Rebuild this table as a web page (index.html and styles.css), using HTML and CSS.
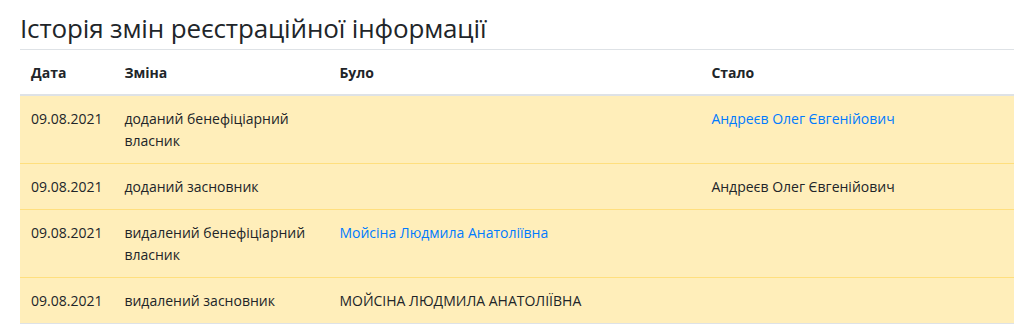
FILE: index.html
```html
<!DOCTYPE html>
<html>
<head>
    <meta charset="utf-8">
    <title>Історія змін</title>
    <link rel="stylesheet" href="styles.css">
</head>
<body>
    <div class="container">
        <h3 class="section-title">Історія змін реєстраційної інформації</h3>
        <table class="history">
            <thead>
                <tr>
                    <th class="col-date">Дата</th>
                    <th class="col-change">Зміна</th>
                    <th class="col-before">Було</th>
                    <th class="col-after">Стало</th>
                </tr>
            </thead>
            <tbody>
                <tr>
                    <td>09.08.2021</td>
                    <td>доданий бенефіціарний власник</td>
                    <td></td>
                    <td><a href="#">Андреєв Олег Євгенійович</a></td>
                </tr>
                <tr>
                    <td>09.08.2021</td>
                    <td>доданий засновник</td>
                    <td></td>
                    <td>Андреєв Олег Євгенійович</td>
                </tr>
                <tr>
                    <td>09.08.2021</td>
                    <td>видалений бенефіціарний власник</td>
                    <td><a href="#">Мойсіна Людмила Анатоліївна</a></td>
                    <td></td>
                </tr>
                <tr>
                    <td>09.08.2021</td>
                    <td>видалений засновник</td>
                    <td>МОЙСІНА ЛЮДМИЛА АНАТОЛІЇВНА</td>
                    <td></td>
                </tr>
            </tbody>
        </table>
    </div>
</body>
</html>
```
FILE: styles.css
```css
body {
    margin: 0;
    padding: 0;
    background: #fff;
    color: #212529;
    font-family: "Open Sans", "Noto Sans", sans-serif;
    font-size: 14px;
    line-height: 22px;
}

.container {
    padding: 0 10px 0 20px;
}

.section-title {
    margin: 0;
    padding-top: 8px;
    font-size: 26px;
    font-weight: 500;
    letter-spacing: -0.15px;
    line-height: 40px;
    color: #212529;
}

.history {
    width: 100%;
    border-collapse: collapse;
    margin-top: 1px;
}

.history th,
.history td {
    padding: 12px 11px 11px;
    text-align: left;
    vertical-align: top;
}

.history th {
    padding: 12px 11px 10px;
    font-weight: 700;
    border-top: 1px solid #dee2e6;
    border-bottom: 2px solid #dee2e6;
}

.history td {
    background: #ffeeba;
    border-top: 1px solid #ffdf7e;
}

.history tbody tr:last-child td {
    border-bottom: 1px solid #dee2e6;
}

.col-date { width: 71px; }
.col-change { width: 193px; }
.col-before { width: 350px; }

.history a {
    color: #007bff;
    text-decoration: none;
}
```
